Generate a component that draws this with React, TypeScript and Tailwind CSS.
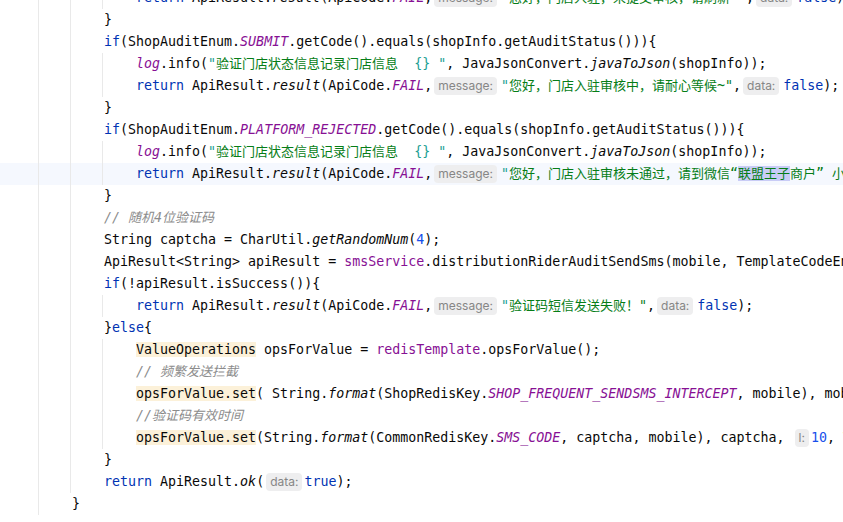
type Tok = [string, string?] | { hint: string; tight?: boolean }

const K = 'text-[#0033b3]'
const SF = 'text-[#871094] italic'
const F = 'text-[#871094]'
const IT = 'italic'
const S = 'text-[#067d17]'
const Q = 'text-[#21a093]'
const C = 'text-[#8c8c8c] italic'
const N = 'text-[#1750eb]'
const HL = 'bg-[#fcf1d9]'
const SEL = 'text-[#067d17] bg-[#c9ccf6]'

const failReturn = (msg: Tok[], tail: Tok[]): Tok[] => [
  ['return', K],
  [' ApiResult.'],
  ['result', IT],
  ['(ApiCode.'],
  ['FAIL', SF],
  [','],
  { hint: 'message:' },
  ...msg,
  ...tail,
]

const logLine: Tok[] = [
  ['log', SF],
  ['.info('],
  ['"', Q],
  ['验证门店状态信息记录门店信息  ', S],
  ['{}', Q],
  [' ', S],
  ['"', Q],
  [', JavaJsonConvert.'],
  ['javaToJson', IT],
  ['(shopInfo));'],
]

const rows: { indent: number; toks: Tok[]; current?: boolean }[] = [
  {
    indent: 12,
    toks: failReturn(
      [['"', Q], ['您好，门店入驻，未提交审核，请刷新~"', S]],
      [[','], { hint: 'data:' }, ['false', K], [');']]
    ),
  },
  { indent: 8, toks: [['}']] },
  {
    indent: 8,
    toks: [
      ['if', K],
      ['(ShopAuditEnum.'],
      ['SUBMIT', SF],
      ['.getCode().equals(shopInfo.getAuditStatus())){'],
    ],
  },
  { indent: 12, toks: logLine },
  {
    indent: 12,
    toks: failReturn(
      [['"', Q], ['您好，门店入驻审核中，请耐心等候~"', S]],
      [[','], { hint: 'data:' }, ['false', K], [');']]
    ),
  },
  { indent: 8, toks: [['}']] },
  {
    indent: 8,
    toks: [
      ['if', K],
      ['(ShopAuditEnum.'],
      ['PLATFORM_REJECTED', SF],
      ['.getCode().equals(shopInfo.getAuditStatus())){'],
    ],
  },
  { indent: 12, toks: logLine },
  {
    indent: 12,
    current: true,
    toks: failReturn(
      [
        ['"', Q],
        ['您好，门店入驻审核未通过，请到微信“', S],
        ['联盟王子', SEL],
        ['商户” 小程序重新提交审核~"', S],
      ],
      [[','], { hint: 'data:' }, ['false', K], [');']]
    ),
  },
  { indent: 8, toks: [['}']] },
  { indent: 8, toks: [['// 随机4位验证码', C]] },
  {
    indent: 8,
    toks: [['String captcha = CharUtil.'], ['getRandomNum', IT], ['('], ['4', N], [');']],
  },
  {
    indent: 8,
    toks: [
      ['ApiResult<String> apiResult = '],
      ['smsService', F],
      ['.distributionRiderAuditSendSms(mobile, TemplateCodeEnum.'],
      ['RIDER_AUDIT', SF],
      [');'],
    ],
  },
  { indent: 8, toks: [['if', K], ['(!apiResult.isSuccess()){']] },
  {
    indent: 12,
    toks: failReturn(
      [['"', Q], ['验证码短信发送失败！"', S]],
      [[','], { hint: 'data:' }, ['false', K], [');']]
    ),
  },
  { indent: 8, toks: [['}'], ['else', K], ['{']] },
  {
    indent: 12,
    toks: [
      ['ValueOperations', HL],
      [' opsForValue = '],
      ['redisTemplate', F],
      ['.opsForValue();'],
    ],
  },
  { indent: 12, toks: [['// 频繁发送拦截', C]] },
  {
    indent: 12,
    toks: [
      ['opsForValue.set', HL],
      ['( String.'],
      ['format', IT],
      ['(ShopRedisKey.'],
      ['SHOP_FREQUENT_SENDSMS_INTERCEPT', SF],
      [', mobile), mobile, '],
    ],
  },
  { indent: 12, toks: [['//验证码有效时间', C]] },
  {
    indent: 12,
    toks: [
      ['opsForValue.set', HL],
      ['(String.'],
      ['format', IT],
      ['(CommonRedisKey.'],
      ['SMS_CODE', SF],
      [', captcha, mobile), captcha, '],
      { hint: 'l:', tight: true },
      ['10', N],
      [', TimeUnit.'],
      ['MINUTES', SF],
      [');'],
    ],
  },
  { indent: 8, toks: [['}']] },
  {
    indent: 8,
    toks: [['return', K], [' ApiResult.'], ['ok', IT], ['('], { hint: 'data:', tight: true }, ['true', K], [');']],
  },
  { indent: 4, toks: [['}']] },
]

// split out CJK runs so they get the 13px advance seen in the editor
function Text({ text }: { text: string }) {
  const parts = text.split(/([\u3000-\u9fff\uff00-\uffef]+)/)
  return (
    <>
      {parts.map((p, i) =>
        i % 2 === 1 ? (
          <span key={i} className="text-[13px]">
            {p}
          </span>
        ) : (
          p
        )
      )}
    </>
  )
}

function Hint({ label, tight }: { label: string; tight?: boolean }) {
  return (
    <span
      className={
        tight
          ? "mx-[2px] inline-block h-[18px] rounded-[4px] bg-[#eeeeef] px-[4px] align-middle font-['Inter',sans-serif] text-[12px] not-italic leading-[18px] text-[#868686]"
          : "ml-[2px] mr-[4px] inline-block h-[18px] rounded-[4px] bg-[#eeeeef] px-[4px] align-middle font-['Inter',sans-serif] text-[12px] not-italic leading-[18px] text-[#868686]"
      }
    >
      {label}
    </span>
  )
}

export default function App() {
  return (
    <div className="h-[522px] w-[843px] overflow-hidden bg-white">
      <div className="-mt-[13px] flex flex-col font-['DejaVu_Sans_Mono','Noto_Sans_CJK_SC',monospace] text-[13.3px] leading-[22px] text-[#080808]">
        {rows.map((row, r) => (
          <div
            key={r}
            className={
              row.current
                ? 'flex h-[22px] w-full items-stretch bg-[#f5f8fe] pl-[38px]'
                : 'flex h-[22px] w-full items-stretch pl-[38px]'
            }
          >
            {Array.from({ length: row.indent / 4 }).map((_, g) => (
              <span key={g} className="w-[32px] shrink-0 border-l border-[#e9e9e9]" />
            ))}
            <span className="ml-[2px] whitespace-pre">
              {row.toks.map((tok, i) =>
                Array.isArray(tok) ? (
                  <span key={i} className={tok[1]}>
                    <Text text={tok[0]} />
                  </span>
                ) : (
                  <Hint key={i} label={tok.hint} tight={tok.tight} />
                )
              )}
            </span>
          </div>
        ))}
      </div>
    </div>
  )
}
